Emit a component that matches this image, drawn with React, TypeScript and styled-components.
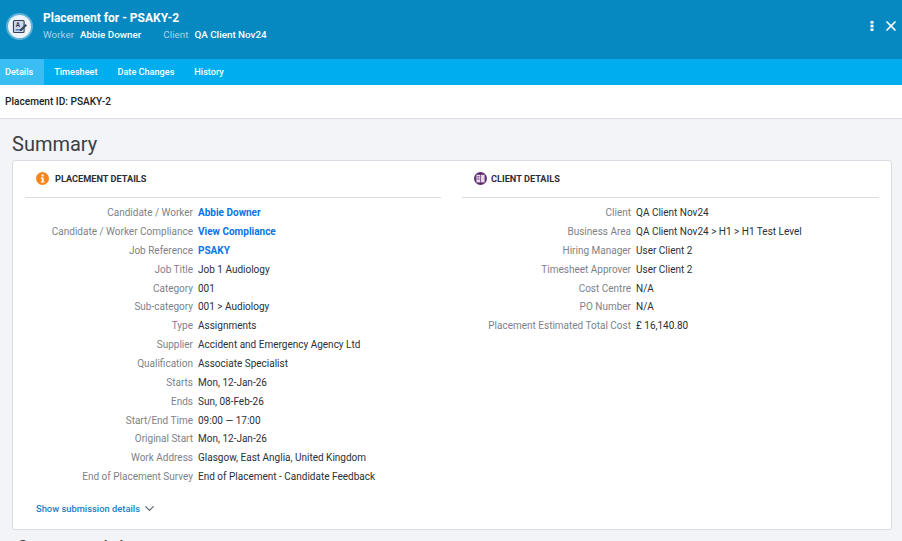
import React from 'react'
import styled, { createGlobalStyle } from 'styled-components'
import { ChevronDown, X } from 'lucide-react'

const placementRows: Row[] = [
  { label: 'Candidate / Worker', value: 'Abbie Downer', link: true },
  { label: 'Candidate / Worker Compliance', value: 'View Compliance', link: true },
  { label: 'Job Reference', value: 'PSAKY', link: true },
  { label: 'Job Title', value: 'Job 1 Audiology' },
  { label: 'Category', value: '001' },
  { label: 'Sub-category', value: '001 > Audiology' },
  { label: 'Type', value: 'Assignments' },
  { label: 'Supplier', value: 'Accident and Emergency Agency Ltd' },
  { label: 'Qualification', value: 'Associate Specialist' },
  { label: 'Starts', value: 'Mon, 12-Jan-26' },
  { label: 'Ends', value: 'Sun, 08-Feb-26' },
  { label: 'Start/End Time', value: '09:00 — 17:00' },
  { label: 'Original Start', value: 'Mon, 12-Jan-26' },
  { label: 'Work Address', value: 'Glasgow, East Anglia, United Kingdom' },
  { label: 'End of Placement Survey', value: 'End of Placement - Candidate Feedback' },
]

const clientRows: Row[] = [
  { label: 'Client', value: 'QA Client Nov24' },
  { label: 'Business Area', value: 'QA Client Nov24 > H1 > H1 Test Level' },
  { label: 'Hiring Manager', value: 'User Client 2' },
  { label: 'Timesheet Approver', value: 'User Client 2' },
  { label: 'Cost Centre', value: 'N/A' },
  { label: 'PO Number', value: 'N/A' },
  { label: 'Placement Estimated Total Cost', value: '£ 16,140.80' },
]

const tabs = ['Details', 'Timesheet', 'Date Changes', 'History']

interface Row {
  label: string
  value: string
  link?: boolean
}

const Rows = ({ rows, labelWidth }: { rows: Row[]; labelWidth: number }) => (
  <DetailList>
    {rows.map(row => (
      <DetailRow key={row.label}>
        <DetailLabel $width={labelWidth}>{row.label}</DetailLabel>
        <DetailValue $link={row.link}>{row.value}</DetailValue>
      </DetailRow>
    ))}
  </DetailList>
)

const App: React.FC = () => {
  return (
    <Page>
      <GlobalStyle />
      <Header>
        <HeaderIcon>
          <svg width="24" height="24" viewBox="0 0 24 24">
            <rect x="3.5" y="3.5" width="15" height="17" rx="1.5" fill="#cfd8e6" stroke="#33415c" strokeWidth="1.6" />
            <rect x="6.5" y="15.5" width="9" height="2.4" fill="#5c88c4" />
            <text x="6.6" y="12.6" fontSize="9" fontWeight="700" fontFamily="Roboto, sans-serif" fill="#33415c">A</text>
            <path d="M13 16 L20.5 8.5 L22.6 10.6 L15 18 L12.6 18.6 Z" fill="#33415c" />
          </svg>
        </HeaderIcon>
        <HeaderText>
          <Title>Placement for - PSAKY-2</Title>
          <MetaLine>
            <MetaLabel>Worker</MetaLabel>
            <MetaValue>Abbie Downer</MetaValue>
            <MetaLabel>Client</MetaLabel>
            <MetaValue>QA Client Nov24</MetaValue>
          </MetaLine>
        </HeaderText>
        <HeaderActions>
          <svg width="4" height="10" viewBox="0 0 4 10">
            <rect x="0.5" y="0" width="3" height="2.6" fill="#fff" />
            <rect x="0.5" y="3.7" width="3" height="2.6" fill="#fff" />
            <rect x="0.5" y="7.4" width="3" height="2.6" fill="#fff" />
          </svg>
          <X size={16} strokeWidth={2.6} />
        </HeaderActions>
      </Header>
      <TabBar>
        {tabs.map((tab, i) => (
          <Tab key={tab} $active={i === 0}>{tab}</Tab>
        ))}
      </TabBar>
      <IdBar>Placement ID: PSAKY-2</IdBar>
      <Content>
        <Heading>Summary</Heading>
        <Card>
          <Columns>
            <Column>
              <SectionHead $inset={11} $gap={6}>
                <SectionIcon $color="#f7861e">
                  <svg width="13" height="13" viewBox="0 0 14 14">
                    <rect x="6" y="2.6" width="2.2" height="2.2" fill="#fff" />
                    <path d="M5.2 6h3v4.2h1v1.2H5.2v-1.2h1V7.2h-1z" fill="#fff" />
                  </svg>
                </SectionIcon>
                <SectionTitle>PLACEMENT DETAILS</SectionTitle>
              </SectionHead>
              <Rows rows={placementRows} labelWidth={168} />
            </Column>
            <Column>
              <SectionHead $inset={12} $gap={4}>
                <SectionIcon $color="#5e2a6e">
                  <svg width="13" height="13" viewBox="0 0 14 14">
                    <rect x="2.6" y="3" width="4.2" height="8.2" fill="#e8dcec" />
                    <rect x="7.6" y="3" width="3.8" height="8.2" fill="#e8dcec" />
                    <rect x="3.6" y="4.6" width="2.2" height="1.1" fill="#5e2a6e" />
                    <rect x="3.6" y="7" width="2.2" height="1.1" fill="#5e2a6e" />
                  </svg>
                </SectionIcon>
                <SectionTitle>CLIENT DETAILS</SectionTitle>
              </SectionHead>
              <Rows rows={clientRows} labelWidth={169} />
            </Column>
          </Columns>
          <ShowMore>
            Show submission details
            <ChevronDown size={15} color="#5f6b7a" strokeWidth={2} />
          </ShowMore>
        </Card>
        <NextHeading>Commercials</NextHeading>
      </Content>
    </Page>
  )
}

export default App

const GlobalStyle = createGlobalStyle`
  html, body {
    margin: 0;
    padding: 0;
    height: 100%;
    overflow: hidden;
    background: #f3f4f7;
  }
  body {
    font-family: Roboto, "Liberation Sans", sans-serif;
    -webkit-font-smoothing: antialiased;
  }
`

const Page = styled.div`
  height: 541px;
  overflow: hidden;
  background: #f3f4f7;
`

const Header = styled.header`
  display: flex;
  align-items: flex-start;
  height: 59px;
  padding: 8px 3px 0 8px;
  box-sizing: border-box;
  background: #0689c1;
  color: #fff;
`

const HeaderIcon = styled.div`
  display: flex;
  align-items: center;
  justify-content: center;
  width: 23px;
  height: 23px;
  margin-top: 7px;
  border-radius: 50%;
  background: #eef3f8;
  box-shadow: 0 0 0 2px rgba(255, 255, 255, 0.35);
  svg {
    width: 17px;
    height: 17px;
  }
`

const HeaderText = styled.div`
  margin-left: 12px;
  flex: 1;
`

const Title = styled.div`
  margin-top: 1px;
  font-size: 12px;
  font-weight: 700;
  line-height: 18px;
`

const MetaLine = styled.div`
  display: flex;
  font-size: 9.85px;
  font-weight: 500;
  line-height: 16px;
`

const MetaLabel = styled.span`
  color: #a9d4e8;
  font-weight: 400;
  margin-right: 6px;
`

const MetaValue = styled.span`
  margin-right: 22px;
`

const HeaderActions = styled.div`
  display: flex;
  align-items: center;
  gap: 9px;
  margin-top: 10px;
`

const TabBar = styled.nav`
  display: flex;
  height: 26px;
  background: #00aeef;
`

const Tab = styled.div<{ $active?: boolean }>`
  display: flex;
  align-items: center;
  padding: 0 ${props => (props.$active ? '11px' : '10px')} 0 ${props => (props.$active ? '5px' : '10px')};
  font-size: 9.15px;
  font-weight: 500;
  color: #fff;
  background: ${props => (props.$active ? '#39bdf3' : 'transparent')};
`

const IdBar = styled.div`
  height: 34px;
  padding-left: 5px;
  box-sizing: border-box;
  display: flex;
  align-items: center;
  background: #fff;
  border-bottom: 1px solid #dcdfe5;
  font-size: 10.1px;
  font-weight: 500;
  color: #222;
`

const Content = styled.main`
  padding: 0 10px 0 12px;
`

const Heading = styled.h1`
  margin: 12px 0 0;
  font-size: 20px;
  font-weight: 400;
  line-height: 26px;
  color: #3a3f47;
`

const Card = styled.section`
  margin-top: 3px;
  height: 370px;
  box-sizing: border-box;
  position: relative;
  background: #fff;
  border: 1px solid #d9dce3;
  border-radius: 3px;
`

const Columns = styled.div`
  display: grid;
  grid-template-columns: 416px 417px;
  column-gap: 21px;
  padding: 0 11px 0 12px;
`

const Column = styled.div`
  min-width: 0;
`

const SectionHead = styled.div<{ $inset: number; $gap: number }>`
  display: flex;
  align-items: center;
  gap: ${props => props.$gap}px;
  height: 37px;
  box-sizing: border-box;
  padding: 0 0 1px ${props => props.$inset}px;
  border-bottom: 1px solid #d9dce3;
`

const SectionIcon = styled.span<{ $color: string }>`
  display: flex;
  align-items: center;
  justify-content: center;
  width: 13px;
  height: 13px;
  border-radius: 50%;
  background: ${props => props.$color};
`

const SectionTitle = styled.h2`
  margin: 0;
  font-size: 9.2px;
  font-weight: 700;
  color: #2b2f36;
`

const DetailList = styled.div`
  display: flex;
  flex-direction: column;
  padding-top: 5.3px;
`

const DetailRow = styled.div`
  display: flex;
  height: 18.85px;
  align-items: center;
  font-size: 10px;
`

const DetailLabel = styled.span<{ $width: number }>`
  width: ${props => props.$width}px;
  flex-shrink: 0;
  text-align: right;
  color: #7d828a;
`

const DetailValue = styled.span<{ $link?: boolean }>`
  margin-left: 5px;
  color: ${props => (props.$link ? '#0a74e8' : '#2b2f36')};
  font-weight: ${props => (props.$link ? 700 : 400)};
`

const ShowMore = styled.div`
  position: absolute;
  left: 23px;
  top: 340px;
  display: flex;
  align-items: center;
  gap: 2px;
  font-size: 9.35px;
  font-weight: 500;
  color: #1a7fc6;
`

const NextHeading = styled.h1`
  margin: 5px 0 0 4px;
  font-size: 20px;
  font-weight: 400;
  line-height: 26px;
  color: #3a3f47;
`
